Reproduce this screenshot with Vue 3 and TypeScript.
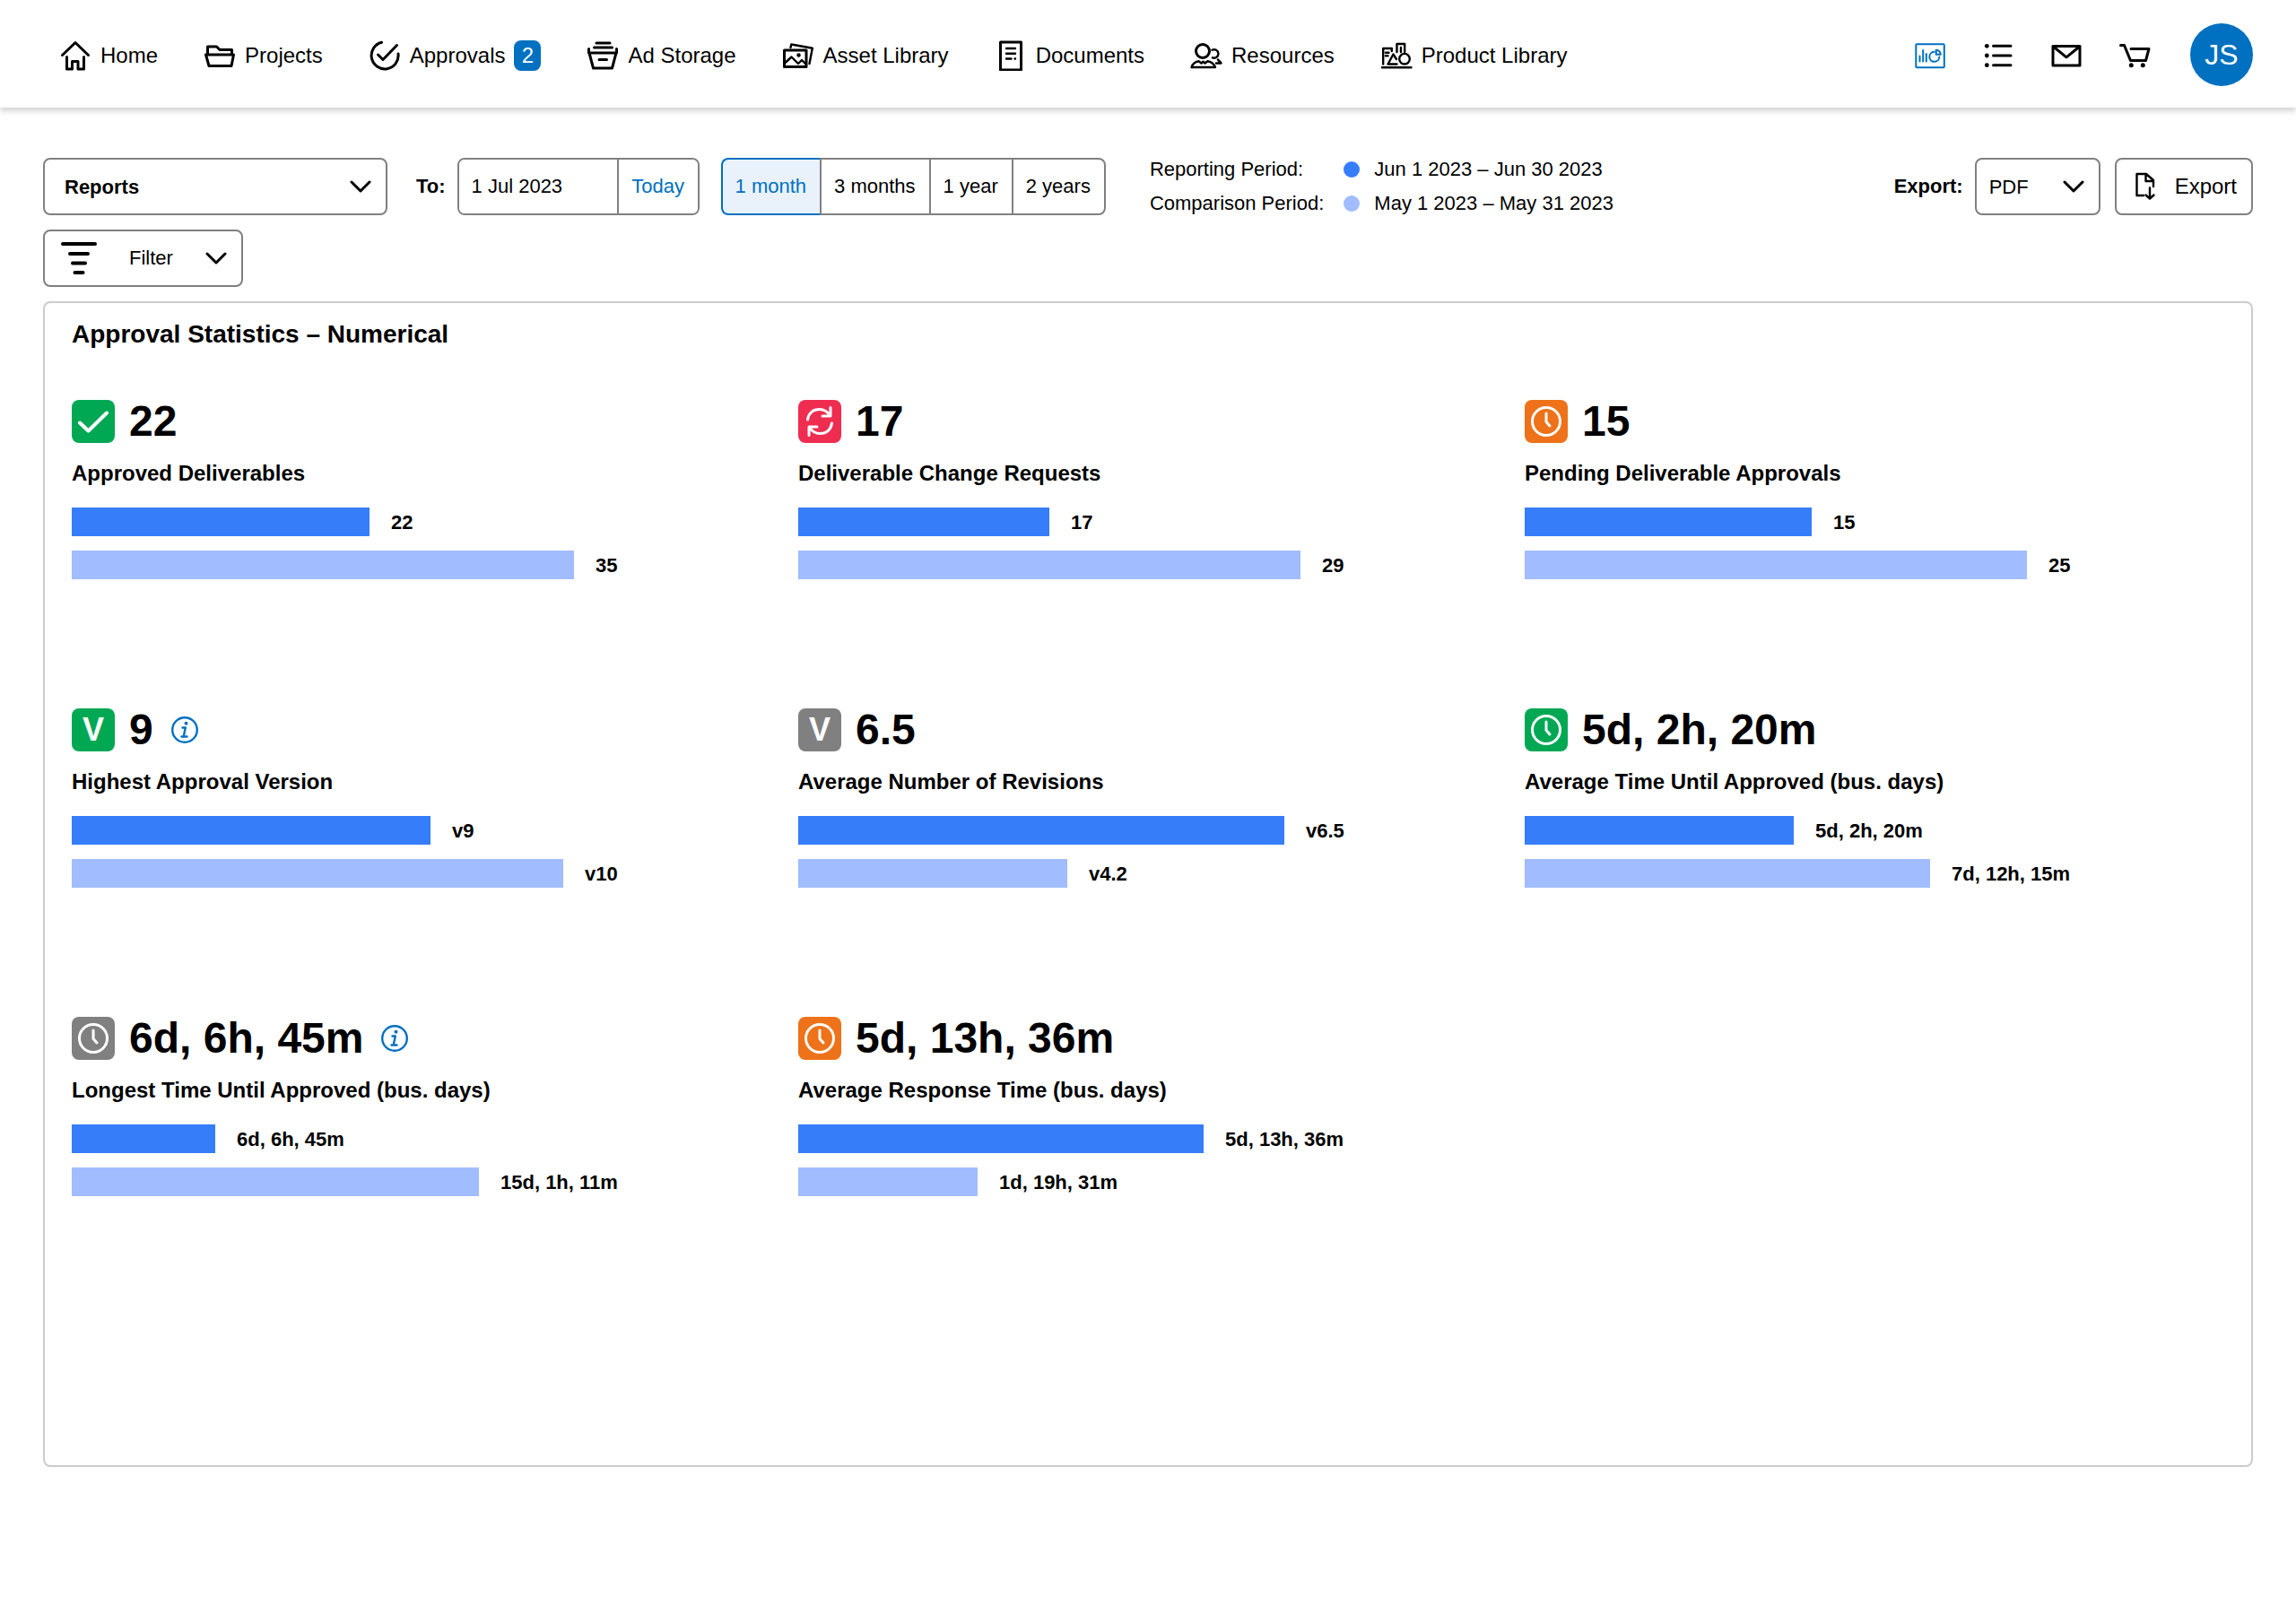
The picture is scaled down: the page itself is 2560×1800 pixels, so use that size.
<script setup lang="ts">
import { ref } from 'vue'

interface NavItem {
  label: string
  icon: string
  badge?: number
}

interface Bar {
  label: string
  size: number
}

interface Stat {
  icon: 'check' | 'sync' | 'clock' | 'version'
  tone: 'green' | 'red' | 'orange' | 'gray'
  value: string
  label: string
  info?: boolean
  current: Bar
  previous: Bar
}

const navItems: NavItem[] = [
  { label: 'Home', icon: 'home' },
  { label: 'Projects', icon: 'projects' },
  { label: 'Approvals', icon: 'approvals', badge: 2 },
  { label: 'Ad Storage', icon: 'storage' },
  { label: 'Asset Library', icon: 'assets' },
  { label: 'Documents', icon: 'documents' },
  { label: 'Resources', icon: 'resources' },
  { label: 'Product Library', icon: 'products' },
]

const periods: string[] = ['1 month', '3 months', '1 year', '2 years']
const period = ref('1 month')
const report = ref('Reports')
const format = ref('PDF')
const toDate = ref('1 Jul 2023')

// Bar sizes are relative to the full chart scale.
const chartScale = 608
const barStyle = (bar: Bar) => ({ width: `${(bar.size / chartScale) * 100}%` })

const stats: Stat[] = [
  { icon: 'check', tone: 'green', value: '22', label: 'Approved Deliverables', current: { label: '22', size: 332 }, previous: { label: '35', size: 560 } },
  { icon: 'sync', tone: 'red', value: '17', label: 'Deliverable Change Requests', current: { label: '17', size: 280 }, previous: { label: '29', size: 560 } },
  { icon: 'clock', tone: 'orange', value: '15', label: 'Pending Deliverable Approvals', current: { label: '15', size: 320 }, previous: { label: '25', size: 560 } },
  { icon: 'version', tone: 'green', value: '9', label: 'Highest Approval Version', info: true, current: { label: 'v9', size: 400 }, previous: { label: 'v10', size: 548 } },
  { icon: 'version', tone: 'gray', value: '6.5', label: 'Average Number of Revisions', current: { label: 'v6.5', size: 542 }, previous: { label: 'v4.2', size: 300 } },
  { icon: 'clock', tone: 'green', value: '5d, 2h, 20m', label: 'Average Time Until Approved (bus. days)', current: { label: '5d, 2h, 20m', size: 300 }, previous: { label: '7d, 12h, 15m', size: 452 } },
  { icon: 'clock', tone: 'gray', value: '6d, 6h, 45m', label: 'Longest Time Until Approved (bus. days)', info: true, current: { label: '6d, 6h, 45m', size: 160 }, previous: { label: '15d, 1h, 11m', size: 454 } },
  { icon: 'clock', tone: 'orange', value: '5d, 13h, 36m', label: 'Average Response Time (bus. days)', current: { label: '5d, 13h, 36m', size: 452 }, previous: { label: '1d, 19h, 31m', size: 200 } },
]
</script>

<template>
  <div class="app">
    <header class="topbar">
      <nav class="nav" aria-label="Main">
        <a v-for="item in navItems" :key="item.label" class="nav-link" href="#">
          <svg class="icon" viewBox="0 0 36 36" aria-hidden="true">
            <template v-if="item.icon === 'home'">
              <path d="M3.5 18.500 18 4.500 32.500 18.500" />
              <path d="M8.500 20.500V34H14.500V25.500H21V34H27.500V20.500" />
            </template>
            <template v-else-if="item.icon === 'projects'">
              <path d="M4.500 17V9H14.500L18 12.500H31.500V17" />
              <path d="M2.500 18H33.500L31 30.500H6Z" />
            </template>
            <template v-else-if="item.icon === 'approvals'">
              <path d="M14.500 4.300A15 15 0 1 0 33 17" />
              <path d="M10.500 18 16 23.500 31.500 7.500" />
            </template>
            <template v-else-if="item.icon === 'storage'">
              <path d="M11 5H26M8.500 10H28.500M2.500 11.500V16H33.500V11.500M3 16 7.500 33H28.500L33 16M14 23.500H22.500" />
            </template>
            <template v-else-if="item.icon === 'assets'">
              <path d="M2.500 13H27V31.500H2.500Z" />
              <path class="fine" d="M9.500 10 10.300 6.500 33.800 10.700 30.500 28" />
              <path class="fine" d="M4 26.500 10.500 20.500 18 28 22 24 26 28" />
              <circle class="solid" cx="18.500" cy="18.500" r="2.200" />
            </template>
            <template v-else-if="item.icon === 'documents'">
              <path d="M6.500 4H29.500V35H6.500Z" />
              <path class="fine" d="M13 11H23M13 16.700H23M13 22.500H18.500M22.500 22.500H23" />
            </template>
            <template v-else-if="item.icon === 'resources'">
              <circle cx="14" cy="14" r="7.500" />
              <path class="fine" d="M1.500 32H28C26.500 28 23.500 26 19.500 25.200L16.500 27.500 14.500 25.700 12.500 27.500 9.500 25.200C5.500 26 2.500 28.500 1.500 32Z" />
              <path class="fine" d="M24.500 12.800A4.700 4.700 0 1 1 25 21.300M31 23.500C31.500 25 33.500 25.500 34.500 27.500H29" />
            </template>
            <template v-else>
              <path class="fine" d="M2 32.300H34.500M3.200 28.500V11H12.800V14M6 15.800H9.500M6 19.300H8.500M18.500 15V6H27.200V15M23 10V15" />
              <path class="fine" d="M18.500 28.500H8.500L14.500 17.500 18 23" />
              <circle class="fine" cx="27" cy="22.700" r="5.800" />
            </template>
          </svg>
          <span>{{ item.label }}</span>
          <span v-if="item.badge" class="badge">{{ item.badge }}</span>
        </a>
      </nav>

      <div class="tools">
        <button class="tool active" type="button" aria-label="Reports">
          <svg class="icon" viewBox="0 0 36 36" aria-hidden="true">
            <rect class="thin" x="2.300" y="6.300" width="31.500" height="26" rx="1" />
            <path class="thin" d="M6.500 19.500V25.500M10.200 13V25.500M13.800 17V25.500" />
            <path class="thin" d="M22.500 14.800A5.500 5.500 0 1 0 28.300 20.500M24.700 12.800V17.700H29.800A5 5 0 0 0 24.700 12.800Z" />
          </svg>
        </button>
        <button class="tool" type="button" aria-label="Tasks">
          <svg class="icon" viewBox="0 0 36 36" aria-hidden="true">
            <path d="M12.500 8.300H32M12.500 19H32M12.500 29.700H32" />
            <circle class="solid" cx="5.300" cy="8.300" r="2.400" />
            <circle class="solid" cx="5.300" cy="19" r="2.400" />
            <circle class="solid" cx="5.300" cy="29.700" r="2.400" />
          </svg>
        </button>
        <button class="tool" type="button" aria-label="Messages">
          <svg class="icon" viewBox="0 0 36 36" aria-hidden="true">
            <path d="M3 8.500H33V30H3ZM3.500 9 18 20.800 32.500 9" />
          </svg>
        </button>
        <button class="tool" type="button" aria-label="Cart">
          <svg class="icon" viewBox="0 0 36 36" aria-hidden="true">
            <path d="M2.500 7.500H6.500L13.500 24.500H30.500L34 11.500H14" />
            <circle class="solid" cx="14.300" cy="29.800" r="2.500" />
            <circle class="solid" cx="27.300" cy="29.800" r="2.500" />
          </svg>
        </button>
        <button class="avatar" type="button" aria-label="Account">JS</button>
      </div>
    </header>

    <main class="page">
      <div class="toolbar">
        <div class="select-box reports">
          <select v-model="report" aria-label="Report type">
            <option>Reports</option>
          </select>
          <svg class="chevron" viewBox="0 0 24 16" aria-hidden="true"><path d="M2 3 12 13 22 3" /></svg>
        </div>

        <div class="field to">
          <label for="to-date">To:</label>
          <div class="date-group">
            <input id="to-date" v-model="toDate" type="text" />
            <button type="button">Today</button>
          </div>
        </div>

        <div class="periods" role="group" aria-label="Period length">
          <button
            v-for="p in periods"
            :key="p"
            type="button"
            :class="{ selected: p === period }"
            :aria-pressed="p === period"
            @click="period = p"
          >{{ p }}</button>
        </div>

        <div class="legend">
          <span>Reporting Period:</span>
          <span class="dot current"></span>
          <span>Jun 1 2023 – Jun 30 2023</span>
          <span>Comparison Period:</span>
          <span class="dot previous"></span>
          <span>May 1 2023 – May 31 2023</span>
        </div>

        <div class="field export">
          <label for="export-format">Export:</label>
          <div class="select-box format">
            <select id="export-format" v-model="format">
              <option>PDF</option>
            </select>
            <svg class="chevron" viewBox="0 0 24 16" aria-hidden="true"><path d="M2 3 12 13 22 3" /></svg>
          </div>
        </div>
        <button class="export-button" type="button">
          <svg viewBox="0 0 24 32" aria-hidden="true">
            <path d="M10 26H2.500V2H13L21 9V16M12.500 2.500V10H21M17 17.500V29.500M12.500 25.500 17 29.700 21.500 25.500" />
          </svg>
          <span>Export</span>
        </button>
      </div>

      <button class="filter" type="button" aria-haspopup="true" aria-expanded="false">
        <svg class="filter-icon" viewBox="0 0 40 40" aria-hidden="true">
          <path d="M2 4H38M10 15H30M13 25.500H27M15.500 36H24.500" />
        </svg>
        <span>Filter</span>
        <svg class="chevron" viewBox="0 0 24 16" aria-hidden="true"><path d="M2 3 12 13 22 3" /></svg>
      </button>

      <section class="panel" aria-labelledby="panel-title">
        <h1 id="panel-title">Approval Statistics – Numerical</h1>
        <div class="stats">
          <article v-for="stat in stats" :key="stat.label" class="stat">
            <div class="stat-head">
              <span class="tile" :class="stat.tone">
                <template v-if="stat.icon === 'version'">V</template>
                <svg v-else viewBox="0 0 48 48" aria-hidden="true">
                  <path v-if="stat.icon === 'check'" class="bold" d="M9 25.500 18.500 34.500 39 14.500" />
                  <template v-else-if="stat.icon === 'clock'">
                    <circle cx="24" cy="24" r="15.500" />
                    <path d="M24 15V24.500L28 29" />
                  </template>
                  <template v-else>
                    <path d="M10.500 22C11.500 14.500 17 10.500 23.500 10.500 29 10.500 33 13.500 35.500 17.500M36 8.500V18H27" />
                    <path d="M37.500 26C36.500 33.500 31 37.500 24.500 37.500 19 37.500 15 34.500 12.500 30.500M12 39.500V30H21" />
                  </template>
                </svg>
              </span>
              <strong class="value">{{ stat.value }}</strong>
              <button v-if="stat.info" class="info" type="button" :aria-label="`About ${stat.label}`">
                <svg viewBox="0 0 30 30" aria-hidden="true">
                  <circle cx="15" cy="15" r="13.800" />
                  <path d="M12.500 12.500H15.800L13.700 22.500H17.500M11.500 22.500H14" />
                  <circle class="solid" cx="16.500" cy="7.800" r="2" />
                </svg>
              </button>
            </div>
            <h2>{{ stat.label }}</h2>
            <div class="bars">
              <div class="bar-row">
                <span class="bar current" :style="barStyle(stat.current)"></span>
                <span class="bar-label">{{ stat.current.label }}</span>
              </div>
              <div class="bar-row">
                <span class="bar previous" :style="barStyle(stat.previous)"></span>
                <span class="bar-label">{{ stat.previous.label }}</span>
              </div>
            </div>
          </article>
        </div>
      </section>
    </main>
  </div>
</template>

<style>
body {
  margin: 0;
  background: #fff;
}
</style>

<style scoped>
.app {
  --blue: #0070c0;
  --line: #808080;
  --current: #367dfa;
  --previous: #a1bcff;
  color: #000;
  font-family: "Liberation Sans", Arial, sans-serif;
  font-size: 22px;
}

.app *,
.app *::before {
  box-sizing: border-box;
}

button,
input,
select {
  margin: 0;
  color: inherit;
  font: inherit;
  background: #fff;
}

button,
select {
  cursor: pointer;
}

svg {
  flex: none;
  fill: none;
  stroke: currentColor;
  stroke-width: 3;
  stroke-linecap: round;
  stroke-linejoin: round;
}

svg .fine {
  stroke-width: 2.4;
}

svg .thin {
  stroke-width: 2;
}

svg .solid {
  fill: currentColor;
  stroke: none;
}

/* Top bar */
.topbar {
  display: flex;
  align-items: center;
  justify-content: space-between;
  height: 120px;
  padding: 2px 48px 0 66px;
  background: #fff;
  box-shadow: 0 4px 6px rgba(0, 0, 0, 0.17);
}

.nav {
  display: flex;
  gap: 51px;
}

.nav-link {
  display: flex;
  align-items: center;
  gap: 10px;
  color: inherit;
  font-size: 24px;
  line-height: 28px;
  text-decoration: none;
  white-space: nowrap;
}

.nav-link span {
  margin-top: 2px;
}

.icon {
  display: block;
  width: 36px;
  height: 36px;
}

.badge {
  width: 30px;
  border-radius: 8px;
  background: var(--blue);
  color: #fff;
  line-height: 34px;
  text-align: center;
}

.tools {
  display: flex;
  align-items: center;
  gap: 40px;
}

.tool {
  padding: 0;
  border: 0;
}

.tool.active {
  color: var(--blue);
}

.avatar {
  width: 70px;
  height: 70px;
  margin-left: 4px;
  padding: 0;
  border: 0;
  border-radius: 50%;
  background: var(--blue);
  color: #fff;
  font-size: 32px;
}

/* Toolbar */
.page {
  padding: 50px 48px;
}

.toolbar {
  display: flex;
  align-items: center;
  margin-bottom: 10px;
  white-space: nowrap;
}

.select-box {
  position: relative;
}

.select-box select {
  display: block;
  width: 100%;
  height: 64px;
  padding: 0 48px 0 14px;
  border: 2px solid var(--line);
  border-radius: 8px;
  appearance: none;
}

.select-box .chevron {
  position: absolute;
  top: 24px;
  right: 18px;
  pointer-events: none;
}

.chevron {
  width: 24px;
  height: 16px;
}

.reports {
  width: 384px;
}

.reports select {
  padding-left: 22px;
  font-weight: bold;
}

.format {
  width: 140px;
}

.field {
  display: flex;
  align-items: center;
  gap: 13px;
}

.field label {
  font-weight: bold;
}

.to {
  margin-left: 32px;
}

.date-group {
  display: flex;
  width: 270px;
  height: 64px;
  border: 2px solid var(--line);
  border-radius: 8px;
  overflow: hidden;
}

.date-group input {
  flex: 1;
  min-width: 0;
  padding: 0 14px;
  border: 0;
}

.date-group button {
  width: 90px;
  padding: 0;
  border: 0;
  border-left: 2px solid var(--line);
  color: var(--blue);
}

.periods {
  display: flex;
  margin-left: 24px;
}

.periods button {
  height: 64px;
  padding: 0 15px 0 14px;
  border: 2px solid var(--line);
  border-right-width: 0;
}

.periods button:first-child {
  border-radius: 8px 0 0 8px;
}

.periods button:last-child {
  border-right-width: 2px;
  border-radius: 0 8px 8px 0;
}

.periods .selected {
  border-color: var(--blue);
  background: #e9f2fa;
  color: var(--blue);
}

.legend {
  display: grid;
  grid-template-columns: auto 18px auto;
  align-items: center;
  margin-left: 49px;
  line-height: 38px;
}

.dot {
  width: 18px;
  height: 18px;
  border-radius: 50%;
}

.legend > :nth-child(3n + 1) {
  margin-right: 22px;
}

.legend > :nth-child(3n) {
  margin-left: 16px;
}

.current {
  background: var(--current);
}

.previous {
  background: var(--previous);
}

.export {
  margin-left: auto;
}

.export-button {
  display: flex;
  align-items: center;
  gap: 21px;
  height: 64px;
  margin-left: 16px;
  padding: 0 16px 0 20px;
  border: 2px solid var(--line);
  border-radius: 8px;
  font-size: 24px;
}

.export-button svg {
  width: 24px;
  height: 32px;
  stroke-width: 2.4;
}

.filter {
  display: flex;
  align-items: center;
  gap: 36px;
  height: 64px;
  margin-bottom: 16px;
  padding: 0 16px 0 18px;
  border: 2px solid var(--line);
  border-radius: 8px;
}

.filter-icon {
  width: 40px;
  height: 40px;
  stroke-width: 4;
}

/* Statistics */
.panel {
  min-height: calc(100vh - 500px);
  padding: 17px 30px 30px;
  border: 2px solid #ccc;
  border-radius: 8px;
}

h1,
h2 {
  margin: 0;
  font-weight: bold;
}

h1 {
  margin-bottom: 55px;
  font-size: 28px;
  line-height: 36px;
}

h2 {
  margin: 16px 0 20px;
  font-size: 24px;
  line-height: 36px;
}

.stats {
  display: grid;
  grid-template-columns: repeat(3, minmax(0, 1fr));
  gap: 144px 30px;
}

.stat-head {
  display: flex;
  align-items: center;
  height: 48px;
}

.tile {
  width: 48px;
  height: 48px;
  margin-right: 16px;
  border-radius: 8px;
  color: #fff;
  font-size: 36px;
  font-weight: bold;
  line-height: 48px;
  text-align: center;
}

.tile svg {
  display: block;
}

.tile .bold {
  stroke-width: 4;
}

.green {
  background: #00a854;
}

.red {
  background: #ee2d50;
}

.orange {
  background: #ee7219;
}

.gray {
  background: #808080;
}

.value {
  font-size: 48px;
  line-height: 48px;
}

.info {
  margin-left: 20px;
  padding: 0;
  border: 0;
  color: var(--blue);
}

.info svg {
  display: block;
  width: 30px;
  height: 30px;
  stroke-width: 2.4;
}

.bars {
  display: grid;
  gap: 16px;
  max-width: 608px;
  font-weight: bold;
}

.bar-row {
  display: flex;
  align-items: center;
  gap: 24px;
  height: 32px;
  white-space: nowrap;
}

.bar {
  flex: none;
  height: 32px;
}

.bar-label {
  margin-top: 2px;
}
</style>
